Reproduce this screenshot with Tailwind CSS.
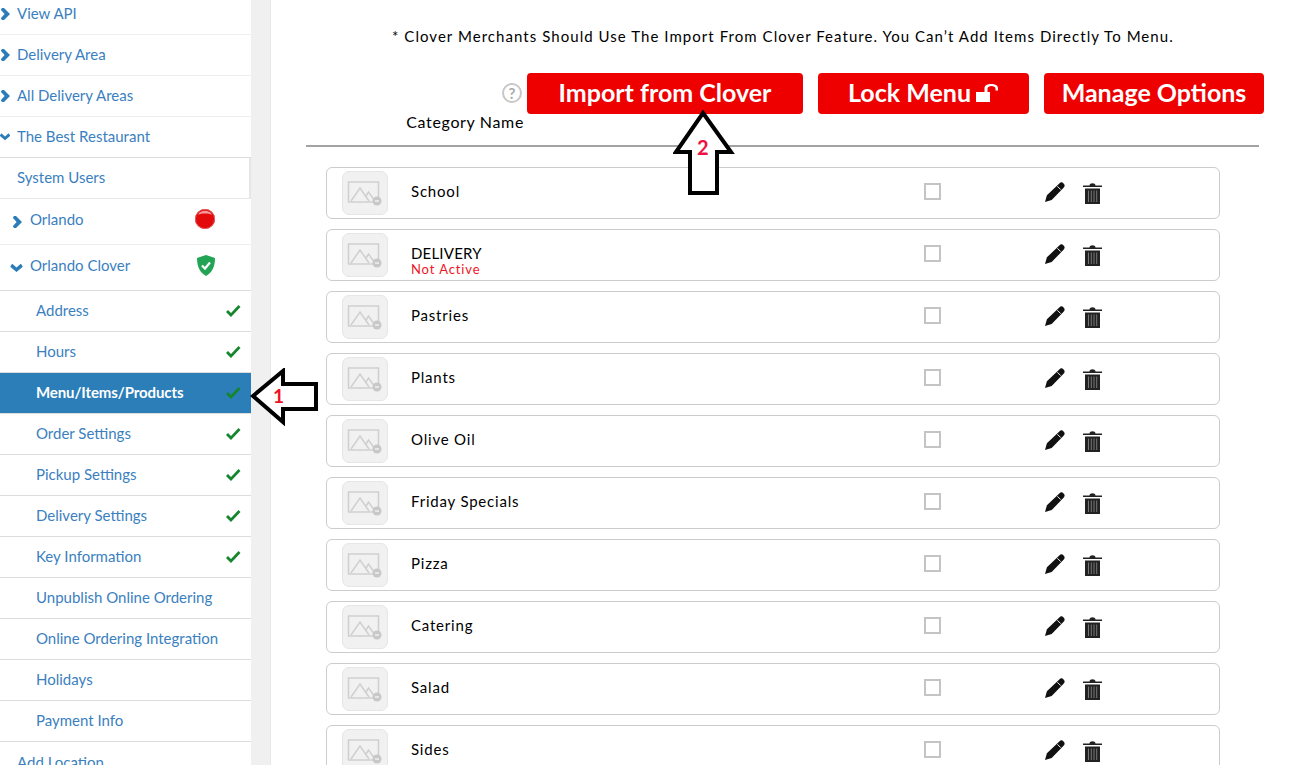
<!DOCTYPE html>
<html lang="en">
<head>
  <meta charset="UTF-8" />
  <title>Menu</title>
  <script src="https://cdn.jsdelivr.net/npm/@tailwindcss/browser@4"></script>
</head>
<body class="relative h-[765px] w-[1295px] overflow-hidden bg-white font-['Lato',sans-serif]">
  <svg class="hidden">
    <symbol id="chev-right" viewBox="0 0 9 12"><path d="M1 0 L0 1.5 L0 2 L3.6 6 L0 10 L0 10.5 L1 12 L3 12 L9 6 L3 0 Z" fill="#2b7cb8"/></symbol>
    <symbol id="chev-down" viewBox="0 0 12 9"><path d="M0 3 L1.5 1 L2 1 L6 4.6 L10 1 L10.5 1 L12 3 L12 4 L6 9 L0 4 Z" fill="#2b7cb8"/></symbol>
    <symbol id="tick" viewBox="0 0 16 14"><path d="M1 8 L3 6 L6 9 L13.5 1 L15.5 3 L6 13 Z" fill="#16862e"/></symbol>
  </svg>

  <div class="flex h-full">
    <!-- sidebar -->
    <nav class="-mt-[6px] w-[251px] shrink-0 text-[15px] text-[#3b7fc0]">
      <a class="flex h-[41px] items-center gap-[7px] border-b border-[#eeeeee] pb-[1px] pl-[1px]"><svg class="h-[12px] w-[9px]"><use href="#chev-right"/></svg>View API</a>
      <a class="flex h-[41px] items-center gap-[7px] border-b border-[#eeeeee] pb-[1px] pl-[1px]"><svg class="h-[12px] w-[9px]"><use href="#chev-right"/></svg>Delivery Area</a>
      <a class="flex h-[41px] items-center gap-[7px] border-b border-[#eeeeee] pb-[1px] pl-[1px]"><svg class="h-[12px] w-[9px]"><use href="#chev-right"/></svg>All Delivery Areas</a>
      <a class="flex h-[41px] items-center gap-[7px] border-b border-[#dcdcdc] pb-[1px] pl-0"><svg class="h-[9px] w-[10px]"><use href="#chev-down"/></svg>The Best Restaurant</a>
      <a class="flex h-[41px] items-center border-r-2 border-b border-[#e6e6e6] pb-[1px] pl-[17px]">System Users</a>
      <a class="flex h-[46px] items-center border-b border-[#eeeeee] pb-[5px] pl-[13px]">
        <svg class="mt-[5px] mr-[8px] h-[12px] w-[9px]"><use href="#chev-right"/></svg>Orlando
        <svg class="mr-[35px] ml-auto" width="22" height="22" viewBox="0 0 22 22">
          <circle cx="11" cy="11" r="10" fill="#e20a0a"/>
          <path d="M4 6.500 C7 1.500 15 1.500 18 6.500 C14 5 8 5 4 6.500 Z" fill="#f39a9a"/>
          <circle cx="11" cy="11" r="9.600" fill="none" stroke="#e25a5a" stroke-width="1"/>
        </svg>
      </a>
      <a class="flex h-[46px] items-center border-b border-[#dcdcdc] pb-[5px] pl-[10px]">
        <svg class="mt-[4px] mr-[7px] h-[9px] w-[13px]"><use href="#chev-down"/></svg>Orlando Clover
        <svg class="mr-[36px] ml-auto" width="18" height="21" viewBox="0 0 18 21">
          <path d="M9 0 L18 3 C18 12 15 17.500 9 21 C3 17.500 0 12 0 3 Z" fill="#22a455"/>
          <path d="M5 10.500 L8 13.500 L13 7.500" fill="none" stroke="#ffffff" stroke-width="2.200"/>
        </svg>
      </a>
      <a class="flex h-[41px] items-center justify-between border-b border-[#dcdcdc] pr-[10px] pb-[1px] pl-[36px]">Address<svg class="h-[14px] w-[16px]"><use href="#tick"/></svg></a>
      <a class="flex h-[41px] items-center justify-between border-b border-[#dcdcdc] pr-[10px] pb-[1px] pl-[36px]">Hours<svg class="h-[14px] w-[16px]"><use href="#tick"/></svg></a>
      <a class="flex h-[41px] items-center justify-between border-b border-[#dcdcdc] bg-[#2b7eb8] pr-[10px] pb-[1px] pl-[36px] font-bold tracking-[-0.1px] text-white">Menu/Items/Products<svg class="h-[14px] w-[16px]"><use href="#tick"/></svg></a>
      <a class="flex h-[41px] items-center justify-between border-b border-[#dcdcdc] pr-[10px] pb-[1px] pl-[36px]">Order Settings<svg class="h-[14px] w-[16px]"><use href="#tick"/></svg></a>
      <a class="flex h-[41px] items-center justify-between border-b border-[#dcdcdc] pr-[10px] pb-[1px] pl-[36px]">Pickup Settings<svg class="h-[14px] w-[16px]"><use href="#tick"/></svg></a>
      <a class="flex h-[41px] items-center justify-between border-b border-[#dcdcdc] pr-[10px] pb-[1px] pl-[36px]">Delivery Settings<svg class="h-[14px] w-[16px]"><use href="#tick"/></svg></a>
      <a class="flex h-[41px] items-center justify-between border-b border-[#dcdcdc] pr-[10px] pb-[1px] pl-[36px]">Key Information<svg class="h-[14px] w-[16px]"><use href="#tick"/></svg></a>
      <a class="flex h-[41px] items-center border-b border-[#dcdcdc] pb-[1px] pl-[36px]">Unpublish Online Ordering</a>
      <a class="flex h-[41px] items-center border-b border-[#dcdcdc] pb-[1px] pl-[36px]">Online Ordering Integration</a>
      <a class="flex h-[41px] items-center border-b border-[#dcdcdc] pb-[1px] pl-[36px]">Holidays</a>
      <a class="flex h-[41px] items-center border-b border-[#dcdcdc] pb-[1px] pl-[36px]">Payment Info</a>
      <a class="flex h-[41px] items-center pb-[1px] pl-[17px]">Add Location</a>
    </nav>

    <div class="w-[20px] shrink-0 border-r border-[#e8e8e8] bg-[#f0f0f0]"></div>

    <!-- main -->
    <main class="flex-1 text-black">
      <p class="pt-[26px] pl-[121px] text-[15px] leading-[20px] tracking-[1.05px]">* Clover Merchants Should Use The Import From Clover Feature. You Can’t Add Items Directly To Menu.</p>

      <div class="mt-[27px] flex items-start pl-[135px]">
        <div class="flex h-[60px] w-[118px] flex-col items-end">
          <span class="mt-[10px] mr-[2px] flex h-[20px] w-[20px] items-center justify-center rounded-full border-2 border-[#c8c8c8] text-[15px] leading-none font-bold text-[#aaaaaa]">?</span>
          <span class="mt-[9px] text-[16px] leading-[20px] tracking-[0.65px] whitespace-nowrap">Category Name</span>
        </div>
        <button class="ml-[3px] h-[41px] w-[276px] rounded-[4px] bg-[#ee0000] pb-[2px] text-[25px] font-bold text-white">Import from Clover</button>
        <button class="ml-[15px] flex h-[41px] w-[211px] items-center justify-center gap-[5px] rounded-[4px] bg-[#ee0000] pb-[2px] text-[25px] font-bold text-white">Lock Menu
          <svg width="23" height="19" viewBox="0 0 23 19"><path d="M0 9 H14 V19 H0 Z M8.500 9 V5 C8.500 -0.500 22 -0.500 22 5 V7.500 H19.500 V5.500 C19.500 2 11.500 2 11.500 5.500 V9 Z" fill="#fff"/></svg>
        </button>
        <button class="ml-[15px] h-[41px] w-[220px] rounded-[4px] bg-[#ee0000] pb-[2px] text-[25px] font-bold text-white">Manage Options</button>
      </div>

      <div class="mt-[12px] ml-[35px] h-[2px] w-[953px] bg-[#a3a3a3]"></div>

      <div id="rows" class="mt-[20px] ml-[55px] flex w-[894px] flex-col gap-[10px]"></div>
    </main>
  </div>

  <!-- callout arrows -->
  <svg class="absolute top-[368px] left-[250px]" width="70" height="58" viewBox="0 0 70 58">
    <path d="M3 28 L33 3 V16 H66 V41 H33 V54 Z" fill="#fff" stroke="#000" stroke-width="4" stroke-linejoin="miter"/>
  </svg>
  <span class="absolute top-[385px] left-[273px] text-[19px] leading-[22px] font-bold text-[#ee1122]">1</span>
  <svg class="absolute top-[110px] left-[673px]" width="62" height="86" viewBox="0 0 62 86">
    <path d="M30 3 L58 42 H44 V83 H17 V42 H3 Z" fill="#fff" stroke="#000" stroke-width="4"/>
  </svg>
  <span class="absolute top-[135px] left-[697px] text-[20px] leading-[24px] font-bold text-[#ee1144]">2</span>

  <script>
    const categories = ["School", "DELIVERY", "Pastries", "Plants", "Olive Oil", "Friday Specials", "Pizza", "Catering", "Salad", "Sides"];
    const rows = document.getElementById("rows");

    categories.forEach(name => {
      const label = name === "DELIVERY"
        ? `<span class="tracking-[0.2px]">DELIVERY</span><span class="block text-[13px] leading-[15px] tracking-[0.9px] text-[#f0141e]">Not Active</span>`
        : name;
      rows.innerHTML += `
        <div class="flex h-[52px] shrink-0 items-center rounded-[6px] border border-[#cccccc] pl-[15px]">
          <div class="flex h-[44px] w-[46px] items-center justify-center rounded-[7px] border border-[#e6e6e6] bg-[#f1f1f1]">
            <svg width="36" height="32" viewBox="0 0 36 32" fill="none" stroke="#cfcfcf" stroke-width="1.500">
              <rect x="1.500" y="5" width="30" height="20"/>
              <path d="M4 24 L13 11 L22 24 M19 19 L21.500 15 L28 24"/>
              <circle cx="30" cy="24" r="4.500" fill="#c8c8c8" stroke="none"/>
              <path d="M28 24 H32" stroke="#f1f1f1"/>
            </svg>
          </div>
          <div class="ml-[23px] h-[40px] w-[513px] pt-[10px] text-[15px] leading-[17px] tracking-[0.8px]">${label}</div>
          <span class="mb-[3px] h-[17px] w-[17px] border-2 border-[#c4c4c4]"></span>
          <svg class="mb-[3px] ml-[104px]" width="20" height="20" viewBox="0 0 21 21"><path d="M0 21 L2 14 L15 1.500 C16.500 0 18 0 19.500 1.500 C21 3 21 4.500 19.500 6 L7 19 Z" fill="#111"/><path d="M13 4.500 L16.500 8" stroke="#fff"/></svg>
          <svg class="mb-[1px] ml-[18px]" width="19" height="22" viewBox="0 0 19 22"><path d="M0 3.500 H6.500 C6.500 0.500 12.500 0.500 12.500 3.500 H19 V5 H0 Z" fill="#222"/><path d="M2 6.500 H17 V22 H2 Z" fill="#222"/><path d="M5.500 8.500 V20 M8.300 8.500 V20 M11 8.500 V20 M13.700 8.500 V20" stroke="#777" stroke-width="1"/></svg>
        </div>`;
    });
  </script>
</body>
</html>
